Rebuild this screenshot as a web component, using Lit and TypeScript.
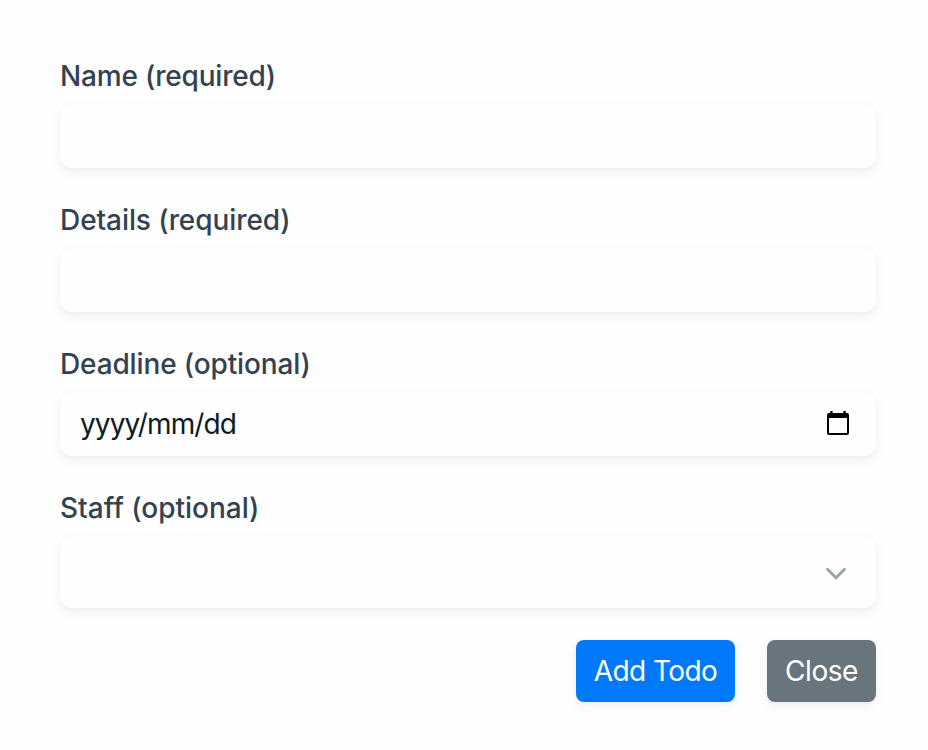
import { LitElement, html, css } from "lit";
import { customElement } from "lit/decorators.js";

@customElement("app-root")
export class AppRoot extends LitElement {
  static styles = css`
    :host {
      display: block;
      box-sizing: border-box;
      width: 100%;
      height: 750px;
      padding: 56px 52px 0 60px;
      background: #fefefe;
      font-family: Inter, "Liberation Sans", sans-serif;
      font-size: 28px;
      line-height: 40px;
    }
    .field { margin-bottom: 32px; }
    .label {
      display: block;
      height: 40px;
      margin-bottom: 8px;
      color: #344250;
      font-weight: 500;
      letter-spacing: -0.13px;
      white-space: nowrap;
    }
    .name { letter-spacing: -0.19px; }
    .details { letter-spacing: -0.08px; }
    .staff { letter-spacing: 0; }
    .control {
      box-sizing: border-box;
      display: flex;
      align-items: center;
      justify-content: space-between;
      height: 64px;
      padding: 0 26px 0 20px;
      border-radius: 12px;
      background: #fefefe;
      box-shadow: 0 4px 12px rgba(0, 0, 0, 0.05), 0 2px 4px rgba(0, 0, 0, 0.03);
      color: #0f1a26;
    }
    .date { letter-spacing: -0.88px; }
    .select { height: 72px; }
    svg { display: block; }
    .actions { display: flex; justify-content: flex-end; gap: 32px; }
    button {
      box-sizing: border-box;
      height: 62px;
      padding: 0;
      border: 0;
      border-radius: 8px;
      color: #fff;
      font: inherit;
      font-weight: 430;
      letter-spacing: -0.58px;
      box-shadow: 0 4px 12px rgba(0, 0, 0, 0.05), 0 2px 4px rgba(0, 0, 0, 0.03);
    }
    .add { width: 159px; background: #007afb; }
    .close { width: 109px; background: #69757d; letter-spacing: -0.45px; }
  `;

  render() {
    return html`
      <div class="field"><label class="label name">Name (required)</label><div class="control"></div></div>
      <div class="field"><label class="label details">Details (required)</label><div class="control"></div></div>
      <div class="field">
        <label class="label">Deadline (optional)</label>
        <div class="control"><span class="date">yyyy/mm/dd</span>
          <svg width="24" height="26" viewBox="0 0 24 26"><path fill="#000" fill-rule="evenodd" d="M4.2 0h2.4v2h10.8V0h2.4v2h1.2q2 0 2 2v18q0 2-2 2H3q-2 0-2-2V4q0-2 2-2h1.2zM3 7v15h18V7z"/></svg>
        </div>
      </div>
      <div class="field">
        <label class="label staff">Staff (optional)</label>
        <div class="control select"><span></span>
          <svg width="28" height="28" viewBox="0 0 28 28"><path d="M5.5 11.3l8.5 8.5 8.5-8.5" fill="none" stroke="#98a3ae" stroke-width="3" stroke-linecap="round" stroke-linejoin="round"/></svg>
        </div>
      </div>
      <div class="actions"><button class="add">Add Todo</button><button class="close">Close</button></div>
    `;
  }
}
